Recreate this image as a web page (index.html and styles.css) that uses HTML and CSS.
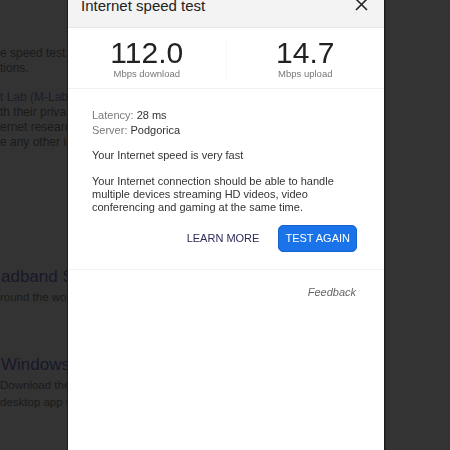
FILE: index.html
```html
<!DOCTYPE html>
<html lang="en">
<head>
  <meta charset="UTF-8" />
  <meta name="viewport" content="width=device-width, initial-scale=1.0"/>
  <title>Internet speed test</title>
  <link rel="stylesheet" href="styles.css">
</head>
<body>

<!-- Page behind the dialog -->
<main class="page">
  <p class="page-text">
    e speed test usually takes less than 30 seconds<br>
    tions.
  </p>
  <p class="page-text">
    <span class="page-link">t Lab (M-Lab)</span> and your IP address is shared<br>
    th their privacy policy. M-Lab conducts the test<br>
    ernet research. Published information doesn't<br>
    e any other information about you as an Internet user.
  </p>

  <div class="result result-first">
    <div class="result-title">adband Speed Test</div>
    <div class="result-desc">round the world</div>
  </div>

  <div class="result">
    <div class="result-title">Windows</div>
    <div class="result-desc">Download the Speedtest app<br>desktop app for Windows</div>
  </div>
</main>

<!-- Dialog -->
<div class="modal">
  <div class="modal-header">
    <span class="modal-title">Internet speed test</span>
    <svg class="close-btn" width="13" height="13" viewBox="0 0 13 13">
      <path d="M1 1 L12 12 M12 1 L1 12" stroke="#222" stroke-width="1.6" fill="none"/>
    </svg>
  </div>

  <div class="speeds">
    <div class="speed">
      <div class="speed-value">112.0</div>
      <div class="speed-label">Mbps download</div>
    </div>
    <div class="speed">
      <div class="speed-value">14.7</div>
      <div class="speed-label">Mbps upload</div>
    </div>
  </div>

  <div class="details">
    <div class="info-row"><span class="info-label">Latency:</span> 28 ms</div>
    <div class="info-row"><span class="info-label">Server:</span> Podgorica</div>
    <p class="verdict">Your Internet speed is very fast</p>
    <p class="summary">Your Internet connection should be able to handle multiple devices streaming HD videos, video conferencing and gaming at the same time.</p>
    <div class="actions">
      <button class="text-btn">LEARN MORE</button>
      <button class="primary-btn">TEST AGAIN</button>
    </div>
  </div>

  <div class="modal-footer">
    <span class="feedback">Feedback</span>
  </div>
</div>

</body>
</html>
```

FILE: styles.css
```css
body {
  margin: 0;
  height: 450px;
  overflow: hidden;
  font-family: "Liberation Sans", Arial, sans-serif;
  background-color: #333;
  color: #1a1a1a;
}

/* Dimmed page behind the dialog */
.page {
  padding-top: 46px;
  white-space: nowrap;
}

.page-text {
  margin: 0 0 13px;
  font-size: 12px;
  line-height: 15.3px;
}

.page-link {
  color: #1b1d28;
}

.result {
  margin-top: 50px;
}

.result-first {
  margin-top: 116px;
}

.result-title {
  font-size: 17px;
  line-height: 20px;
  color: #18182a;
  padding-left: 1px;
}

.result-desc {
  font-size: 11.5px;
  line-height: 16.5px;
  margin-top: 2px;
}

/* Dialog */
.modal {
  position: fixed;
  top: -12px;
  left: 68px;
  width: 316px;
  height: 470px;
  background-color: white;
  color: #222;
  box-shadow: -1px 0 0 #1c1c1c, 1px 0 0 #1c1c1c, 2px 0 0 #262626;
}

.modal-header {
  display: flex;
  justify-content: space-between;
  align-items: center;
  background-color: #f3f3f3;
  border-bottom: 1px solid #e6e6e6;
  padding: 9px 16px 12px 13px;
}

.modal-title {
  font-size: 15px;
  line-height: 18px;
  color: #222;
}

.close-btn {
  margin-top: -4px;
}

.speeds {
  display: flex;
  border-bottom: 1px solid #f0f0f0;
  padding: 10px 0 8px;
}

.speed {
  flex: 1;
  text-align: center;
}

.speed + .speed {
  border-left: 1px solid #f8f8f8;
}

.speed-value {
  font-size: 30px;
  line-height: 30px;
  color: #222;
}

.speed-label {
  font-size: 9.5px;
  line-height: 12px;
  color: #777;
}

.details {
  padding: 19px 27px 17px 24px;
  border-bottom: 1px solid #f2f2f2;
  font-size: 11px;
}

.info-row {
  line-height: 15px;
  color: #333;
}

.info-label {
  color: #7a7a7a;
}

.verdict {
  margin: 10px 0 0;
  line-height: 15px;
  color: #333;
}

.summary {
  margin: 12px 0 0;
  line-height: 13px;
  color: #333;
}

.actions {
  display: flex;
  justify-content: flex-end;
  align-items: center;
  gap: 11px;
  margin-top: 10px;
}

.text-btn {
  background: none;
  border: none;
  padding: 8px;
  font-family: inherit;
  font-size: 11px;
  color: #2c2b5a;
}

.primary-btn {
  background-color: #1a73e8;
  color: white;
  border: 1px solid #1765cc;
  border-radius: 5px;
  height: 27px;
  padding: 0 6px;
  font-family: inherit;
  font-size: 11px;
}

.modal-footer {
  display: flex;
  justify-content: flex-end;
  padding: 15px 28px;
}

.feedback {
  font-size: 11px;
  line-height: 14px;
  font-style: italic;
  color: #666;
}
```
